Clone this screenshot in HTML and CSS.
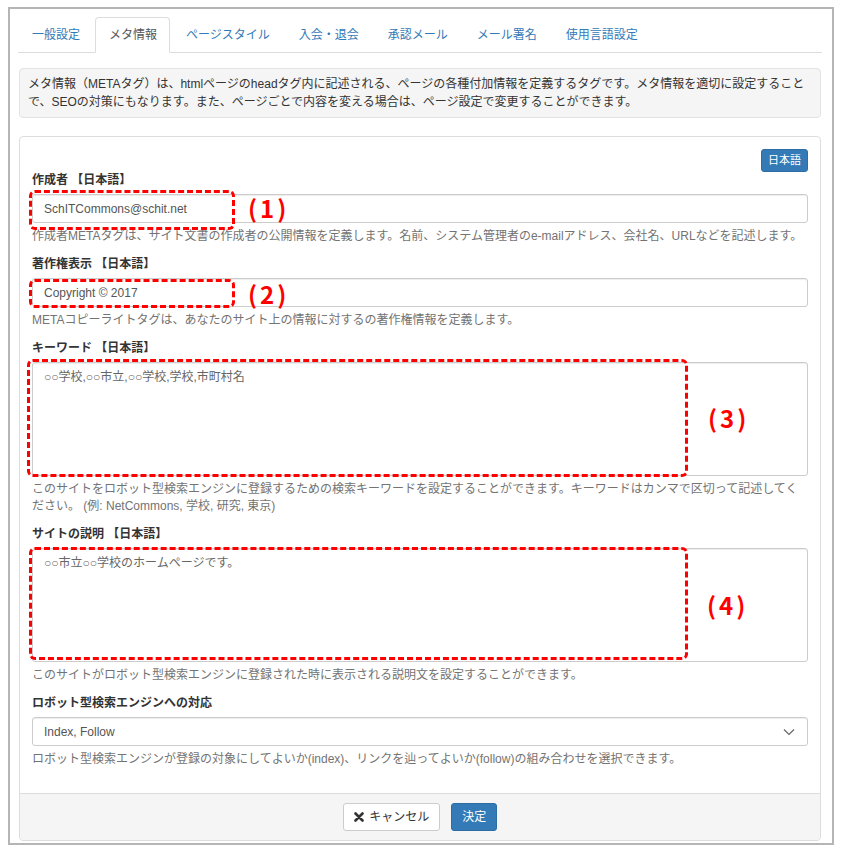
FILE: index.html
```html
<!DOCTYPE html>
<html lang="ja">
<head>
  <meta charset="UTF-8">
  <title>メタ情報</title>
  <link rel="stylesheet" href="styles.css">
</head>
<body>

<div class="frame">
  <ul class="tabs">
    <li><a href="#">一般設定</a></li>
    <li class="active"><a href="#">メタ情報</a></li>
    <li><a href="#">ページスタイル</a></li>
    <li><a href="#">入会・退会</a></li>
    <li><a href="#">承認メール</a></li>
    <li><a href="#">メール署名</a></li>
    <li><a href="#">使用言語設定</a></li>
  </ul>

  <div class="note">メタ情報（METAタグ）は、htmlページのheadタグ内に記述される、ページの各種付加情報を定義するタグです。メタ情報を適切に設定することで、SEOの対策にもなります。また、ページごとで内容を変える場合は、ページ設定で変更することができます。</div>

  <form class="panel">
    <div class="panel-body">
      <div class="lang-bar">
        <button type="button" class="btn btn-primary btn-xs">日本語</button>
      </div>

      <div class="form-group">
        <label>作成者 【日本語】</label>
        <div class="field">
          <input type="text" class="form-control" value="SchITCommons@schit.net">
          <span class="mark mark-1"></span>
          <span class="mark-label label-1">(1)</span>
        </div>
        <p class="help">作成者METAタグは、サイト文書の作成者の公開情報を定義します。名前、システム管理者のe-mailアドレス、会社名、URLなどを記述します。</p>
      </div>

      <div class="form-group">
        <label>著作権表示 【日本語】</label>
        <div class="field">
          <input type="text" class="form-control" value="Copyright © 2017">
          <span class="mark mark-2"></span>
          <span class="mark-label label-2">(2)</span>
        </div>
        <p class="help">METAコピーライトタグは、あなたのサイト上の情報に対するの著作権情報を定義します。</p>
      </div>

      <div class="form-group">
        <label>キーワード 【日本語】</label>
        <div class="field">
          <textarea class="form-control">○○学校,○○市立,○○学校,学校,市町村名</textarea>
          <span class="mark mark-3"></span>
          <span class="mark-label label-3">(3)</span>
        </div>
        <p class="help">このサイトをロボット型検索エンジンに登録するための検索キーワードを設定することができます。キーワードはカンマで区切って記述してください。 (例: NetCommons, 学校, 研究, 東京)</p>
      </div>

      <div class="form-group">
        <label>サイトの説明 【日本語】</label>
        <div class="field">
          <textarea class="form-control">○○市立○○学校のホームページです。</textarea>
          <span class="mark mark-4"></span>
          <span class="mark-label label-4">(4)</span>
        </div>
        <p class="help">このサイトがロボット型検索エンジンに登録された時に表示される説明文を設定することができます。</p>
      </div>

      <div class="form-group">
        <label>ロボット型検索エンジンへの対応</label>
        <div class="field">
          <select class="form-control">
            <option>Index, Follow</option>
            <option>Index, Nofollow</option>
            <option>Noindex, Follow</option>
            <option>Noindex, Nofollow</option>
          </select>
          <svg class="caret" width="12" height="8" viewBox="0 0 12 8"><path d="M1 1.5 L6 6.5 L11 1.5" fill="none" stroke="#666" stroke-width="1.2"/></svg>
        </div>
        <p class="help">ロボット型検索エンジンが登録の対象にしてよいか(index)、リンクを辿ってよいか(follow)の組み合わせを選択できます。</p>
      </div>
    </div>

    <div class="panel-footer">
      <button type="button" class="btn btn-default">
        <svg class="icon" width="10" height="10" viewBox="0 0 10 10"><path d="M1.5 1.5 L8.5 8.5 M8.5 1.5 L1.5 8.5" stroke="#333" stroke-width="2.6" stroke-linecap="round"/></svg>
        キャンセル
      </button>
      <button type="submit" class="btn btn-primary">決定</button>
    </div>
  </form>
</div>

</body>
</html>
```

FILE: styles.css
```css
body { margin: 0; background: #fff; font-family: "Liberation Sans", "Noto Sans CJK JP", sans-serif; font-size: 12px; color: #333; }
.frame { box-sizing: border-box; margin: 7px 0 0 8px; width: 826px; border: 2px solid #b5b5b5; padding: 8px 10px 2px 8px; background: #fff; }

.tabs { list-style: none; margin: 0; padding: 0; display: flex; border-bottom: 1px solid #ddd; }
.tabs li { margin: 0 2px -1px 0; }
.tabs a { display: block; padding: 9px 12px 8px 13px; line-height: 17px; border: 1px solid transparent; border-radius: 4px 4px 0 0; color: #337ab7; text-decoration: none; }
.tabs .active a { color: #555; background: #fff; border-color: #ddd #ddd transparent; }

.note { margin: 15px 1px 0; padding: 6px 8px; line-height: 18px; background: #f5f5f5; border: 1px solid #e3e3e3; border-radius: 4px; color: #333; }

.panel { margin: 18px 1px 0; border: 1px solid #ddd; border-radius: 4px; background: #fff; }
.panel-body { padding: 12px 12px 14px; }
.lang-bar { display: flex; justify-content: flex-end; }

.btn { font-family: inherit; font-size: 12px; line-height: 17px; border: 1px solid transparent; border-radius: 3px; cursor: pointer; }
.btn-xs { font-size: 11px; padding: 2px 6px; line-height: 17px; }
.btn-primary { background: #337ab7; border-color: #2e6da4; color: #fff; }
.btn-default { background: #fff; border-color: #ccc; color: #333; }

.form-group { margin-bottom: 11px; }
.form-group label { display: block; font-weight: bold; line-height: 17px; margin-bottom: 5px; color: #333; }
.field { position: relative; }
.form-control { display: block; width: 100%; box-sizing: border-box; height: 29px; padding: 4px 11px; font-family: inherit; font-size: 12px; color: #555; background: #fff; border: 1px solid #ccc; border-radius: 3px; box-shadow: inset 0 1px 1px rgba(0, 0, 0, 0.075); }
textarea.form-control { height: 114px; resize: none; padding: 6px 11px; line-height: 17px; color: #666; }
select.form-control { appearance: none; -webkit-appearance: none; }
.caret { position: absolute; right: 13px; top: 11px; }
.help { margin: 5px 0 0; line-height: 17px; color: #737373; }

.mark { position: absolute; box-sizing: border-box; border: 3px dashed #f00; border-radius: 6px; }
.mark-1 { left: -3px; top: -4px; width: 206px; height: 40px; }
.mark-2 { left: -3px; top: 1px; width: 206px; height: 29px; }
.mark-3 { left: -5px; top: -3px; width: 661px; height: 118px; }
.mark-4 { left: -3px; top: -1px; width: 659px; height: 113px; }
.mark-label { position: absolute; font-family: "Noto Sans CJK JP", sans-serif; font-weight: bold; font-size: 24px; line-height: 28px; letter-spacing: 3px; color: #f00; }
.label-1 { left: 216px; top: 0; }
.label-2 { left: 216px; top: 2px; }
.label-3 { left: 676px; top: 42px; }
.label-4 { left: 675px; top: 43px; }

.panel-footer { background: #f5f5f5; border-top: 1px solid #ddd; border-radius: 0 0 3px 3px; padding: 9px 0; display: flex; justify-content: center; gap: 11px; }
.panel-footer .btn { padding: 4px 10px; height: 28px; }
.panel-footer .icon { margin-right: 2px; vertical-align: -1px; }
```
